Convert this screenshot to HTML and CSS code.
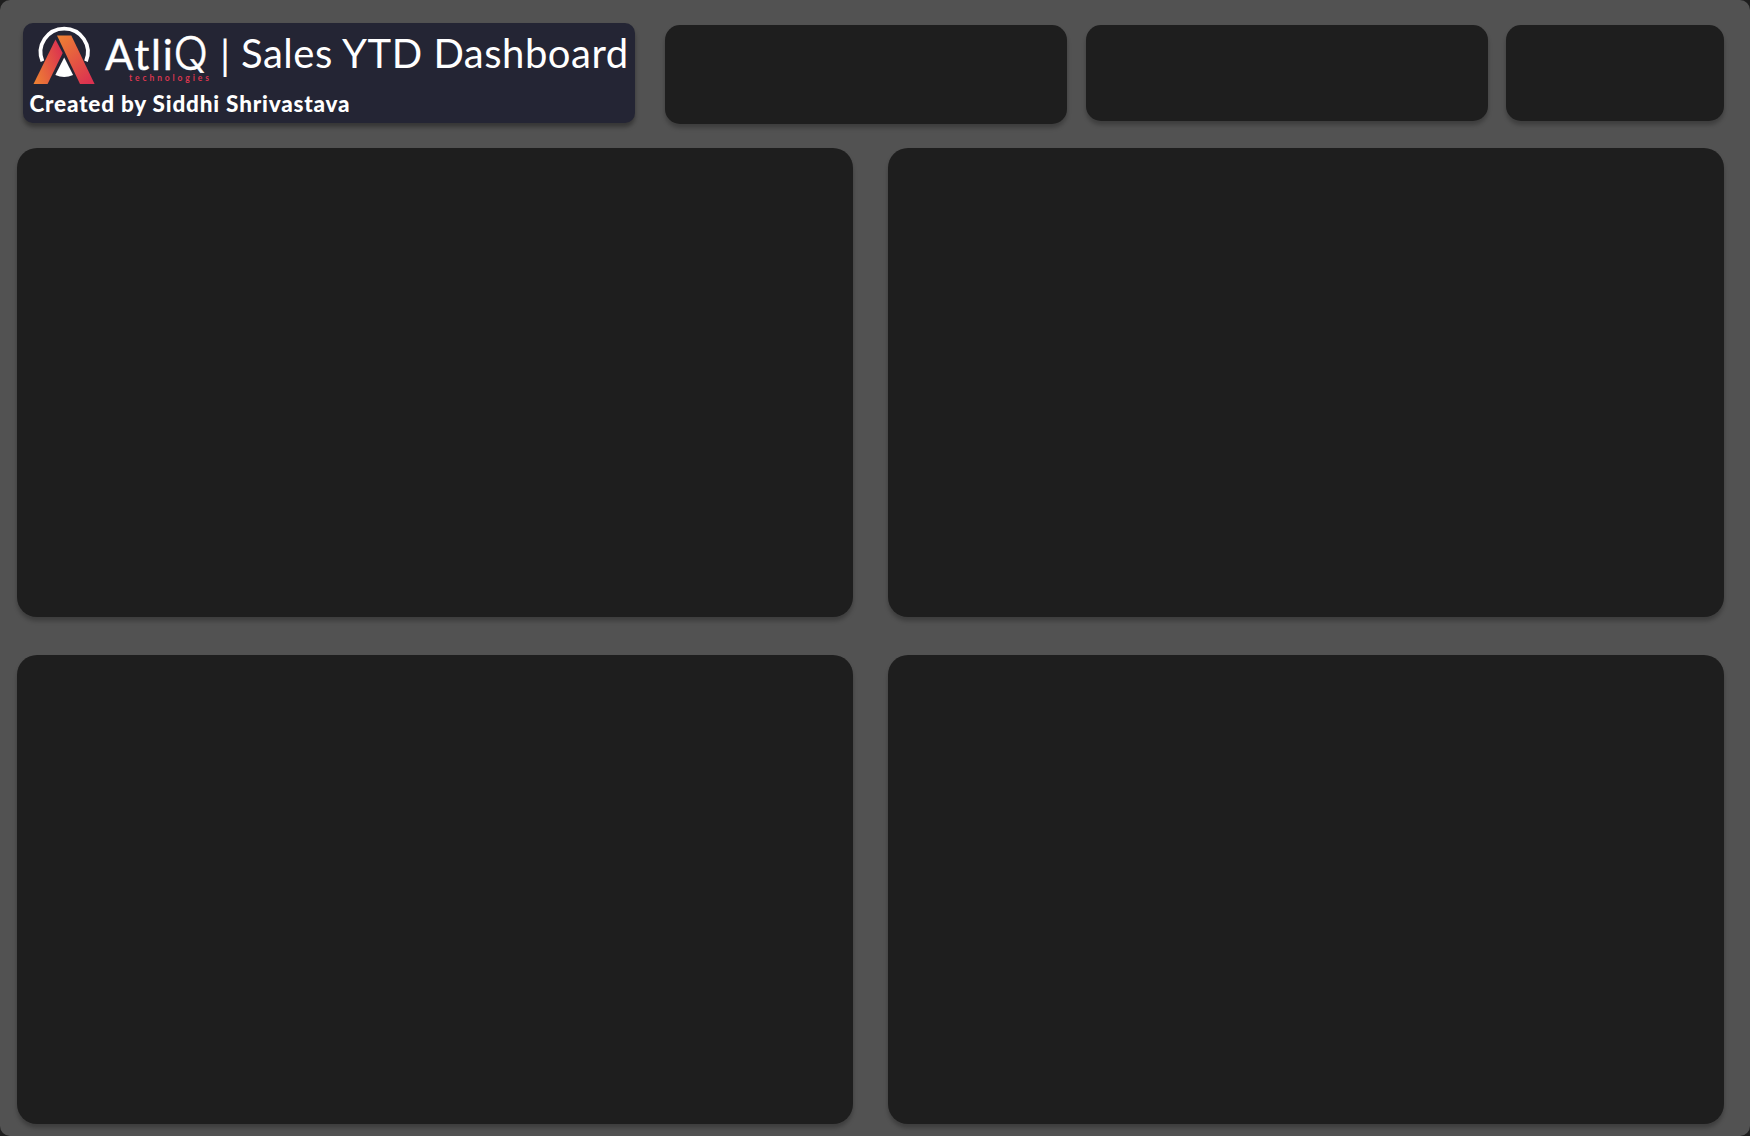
FILE: index.html
```html
<!DOCTYPE html>
<html lang="en">
<head>
<meta charset="utf-8">
<title>AtliQ | Sales YTD Dashboard</title>
<link rel="stylesheet" href="styles.css">
</head>
<body>
<main class="dashboard">
  <header class="header">
    <section class="brand">
      <div class="brand-row">
        <svg class="logo" viewBox="32 23 180 64" role="img" aria-label="AtliQ technologies">
          <defs>
            <linearGradient id="legLeft" x1="0" y1="0.8" x2="1" y2="0.3">
              <stop offset="0" stop-color="#ed7f33"/>
              <stop offset="1" stop-color="#dc3250"/>
            </linearGradient>
            <linearGradient id="legRight" x1="0.1" y1="0" x2="0.8" y2="1">
              <stop offset="0" stop-color="#ed7f33"/>
              <stop offset="1" stop-color="#dc3250"/>
            </linearGradient>
          </defs>
          <path class="logo-ring" d="M42.4 61.2 A23.6 23.6 0 1 1 86 61.2"/>
          <path class="logo-core" d="M64.2 57.5 L73.1 75 Q64.2 79 55.3 75 Z"/>
          <path fill="url(#legLeft)" d="M55.5 39.5 L62.7 53 L47.6 84 H33.5 Z"/>
          <path fill="url(#legRight)" d="M57 35.5 H71.3 L94.6 84 H80 Z"/>
          <text class="logo-name" y="70" x="105 134.3 151.1 162.8 173.3">Atli<tspan class="logo-q">Q</tspan></text>
          <text class="logo-sub" x="129" y="81" textLength="80">technologies</text>
        </svg>
        <span class="divider">|</span>
        <h1 class="title">Sales YTD Dashboard</h1>
      </div>
      <p class="author">Created by Siddhi Shrivastava</p>
    </section>
    <section class="card card-tall"></section>
    <section class="card"></section>
    <section class="card"></section>
  </header>
  <div class="panels">
    <section class="panel"></section>
    <section class="panel"></section>
    <section class="panel"></section>
    <section class="panel"></section>
  </div>
</main>
</body>
</html>
```

FILE: styles.css
```css
* {
  box-sizing: border-box;
}

body {
  margin: 0;
  background: #1e1e1e;
  font-family: Lato, sans-serif;
  color: #fff;
}

.dashboard {
  width: 1750px;
  height: 1136px;
  padding: 22px 26px 12px 17px;
  border-radius: 10px;
  background: #525252;
}

.header {
  display: grid;
  grid-template-columns: 642px 421px 420px 218px;
  height: 126px;
  padding-left: 6px;
}

.brand {
  width: 612px;
  height: 100.5px;
  margin-top: 0.5px;
  padding: 0.5px 0 0 7px;
  border-radius: 10px;
  background: #242534;
  box-shadow: 0 4px 4px rgba(0, 0, 0, 0.35);
}

.brand-row {
  display: flex;
  height: 65px;
}

.logo {
  flex: none;
  width: 180px;
  height: 64px;
  margin-left: 2px;
}

.logo-ring {
  fill: none;
  stroke: #fff;
  stroke-width: 3.8;
}

.logo-core {
  fill: #fff;
}

.logo-name {
  fill: #fff;
  stroke: #fff;
  stroke-width: 0.4;
  font-size: 42px;
}

.logo-q {
  font-family: Inter, sans-serif;
  font-size: 46px;
  font-weight: 300;
}

.logo-sub {
  fill: #d8364f;
  font-size: 8.5px;
  font-weight: 700;
}

.divider {
  width: 29px;
  padding-left: 8px;
  font-size: 40px;
  line-height: 64px;
}

.title {
  margin: 0;
  font-size: 40px;
  font-weight: 400;
  line-height: 61px;
  letter-spacing: 0.53px;
  white-space: nowrap;
}

.author {
  margin: 0 0 0 -0.5px;
  font-size: 22.5px;
  font-weight: 900;
  line-height: 32px;
  letter-spacing: 0.8px;
  white-space: nowrap;
}

.card {
  width: 402px;
  height: 96px;
  margin-top: 3px;
  border-radius: 15px;
  background: #1e1e1e;
  box-shadow: 0 4px 4px rgba(0, 0, 0, 0.25);
}

.card-tall {
  height: 99px;
}

.card:last-child {
  width: 218px;
}

.panels {
  display: grid;
  grid-template-columns: 836px 836px;
  grid-template-rows: 469px 469px;
  gap: 38px 35px;
}

.panel {
  border-radius: 20px;
  background: #1e1e1e;
  box-shadow: 0 4px 4px rgba(0, 0, 0, 0.25);
}
```
